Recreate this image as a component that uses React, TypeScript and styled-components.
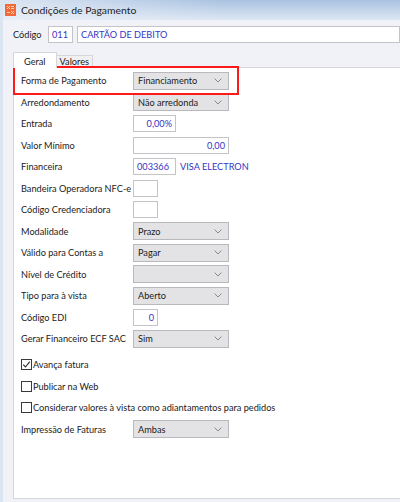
import React from 'react';
import styled, { createGlobalStyle } from 'styled-components';

const GlobalStyle = createGlobalStyle`
  html, body {
    margin: 0;
    padding: 0;
    background: #f1f2f7;
  }
  body {
    font-family: Lato, 'Liberation Sans', sans-serif;
  }
`;

const BLUE_TEXT = '#3535c4';

const Window = styled.div`
  position: relative;
  width: 400px;
  height: 502px;
  display: flex;
  flex-direction: column;
  background: #f1f2f7;
  border-left: 3px solid #dbe5f2;
  box-sizing: border-box;
  overflow: hidden;
  color: #1b1b1b;
  font-size: 9.2px;
`;

const TitleBar = styled.div`
  height: 20px;
  display: flex;
  align-items: center;
  gap: 5px;
  padding-left: 2px;
  background: linear-gradient(to right, rgba(236, 241, 248, 0.75), rgba(236, 241, 248, 0) 55%),
    linear-gradient(to bottom, #a9c2e1, #dde7f3);
  font-size: 10.4px;
  color: #1e1e1e;
`;

const CodeRow = styled.div`
  display: flex;
  align-items: center;
  height: 17px;
  margin-top: 6px;
  padding-left: 10px;
`;

const CodeLabel = styled.span`
  width: 35px;
`;

const TextBox = styled.div<{ $width?: number; $align?: 'left' | 'right'; $grow?: boolean }>`
  height: 17px;
  box-sizing: border-box;
  width: ${(p) => (p.$grow ? 'auto' : `${p.$width ?? 24}px`)};
  flex: ${(p) => (p.$grow ? 1 : 'none')};
  display: flex;
  align-items: center;
  justify-content: ${(p) => (p.$align === 'right' ? 'flex-end' : 'flex-start')};
  padding: 0 3px;
  background: #fff;
  border: 1px solid #c4c4c8;
  color: ${BLUE_TEXT};
  white-space: nowrap;
`;

const TabStrip = styled.div`
  display: flex;
  align-items: flex-end;
  height: 16px;
  margin-top: 8px;
  padding-left: 10px;
`;

const Tab = styled.div<{ $active?: boolean }>`
  height: ${(p) => (p.$active ? 16 : 12)}px;
  box-sizing: border-box;
  padding: ${(p) => (p.$active ? '1px 10px 0 10px' : '0 3px')};
  background: ${(p) => (p.$active ? '#fff' : '#f0f0f2')};
  border: 1px solid #d6d6da;
  border-bottom: ${(p) => (p.$active ? 'none' : '1px solid #d6d6da')};
  border-left: ${(p) => (p.$active ? '1px solid #d6d6da' : 'none')};
  display: flex;
  align-items: center;
  margin-bottom: ${(p) => (p.$active ? '-1px' : '0')};
  position: relative;
  z-index: ${(p) => (p.$active ? 1 : 0)};
`;

const Panel = styled.div`
  flex: 1;
  margin: 0 0 3px 10px;
  background: #fff;
  border: 1px solid #d6d6da;
  border-right: none;
  padding: 2px 0 0 7px;
  display: flex;
  flex-direction: column;
`;

const FieldRow = styled.div`
  height: 21.5px;
  display: flex;
  align-items: center;
`;

const FieldLabel = styled.span`
  width: 112px;
  flex: none;
  white-space: nowrap;
`;

const SelectBox = styled.div`
  width: 96px;
  height: 18px;
  box-sizing: border-box;
  display: flex;
  align-items: center;
  justify-content: space-between;
  padding: 0 6px 0 4px;
  background: #e3e3e5;
  border: 1px solid #b9b9bd;
`;

const Lookup = styled.span`
  margin-left: 4px;
  color: ${BLUE_TEXT};
`;

const CheckRow = styled.label<{ $first?: boolean }>`
  height: 21.5px;
  display: flex;
  align-items: center;
  margin-top: ${(p) => (p.$first ? '4.5px' : '0')};
`;

const CheckBox = styled.span`
  width: 11px;
  height: 11px;
  box-sizing: border-box;
  border: 1px solid #3a3a3a;
  background: #fff;
  margin-right: 1px;
  display: flex;
  align-items: center;
  justify-content: center;
`;

const Highlight = styled.div`
  position: absolute;
  left: 10px;
  top: 66px;
  width: 226px;
  height: 29px;
  box-sizing: border-box;
  border: 2.5px solid #ff1a1a;
  pointer-events: none;
`;

const Chevron = () => (
  <svg width="8" height="5" viewBox="0 0 8 5">
    <path d="M0.5 0.5 L4 4 L7.5 0.5" fill="none" stroke="#8a8a8e" strokeWidth="1" />
  </svg>
);

const Check = () => (
  <svg width="9" height="9" viewBox="0 0 9 9">
    <path d="M1.2 4.6 L3.5 7 L7.8 1.6" fill="none" stroke="#2a2a2a" strokeWidth="1.1" />
  </svg>
);

const AppIcon = () => (
  <svg width="11" height="12" viewBox="0 0 11 12">
    <rect width="11" height="12" fill="#f26a3a" />
    <path d="M2 2 L5 5 M5 2 L2 5 M6 7 L9 10 M9 7 L6 10" stroke="#ffd7b8" strokeWidth="1" />
    <rect x="6" y="2" width="3" height="1" fill="#ffd7b8" />
    <rect x="6" y="4" width="3" height="1" fill="#ffd7b8" />
    <rect x="2" y="8" width="3" height="1" fill="#ffd7b8" />
  </svg>
);

const Select = ({ value }: { value: string }) => (
  <SelectBox>
    <span>{value}</span>
    <Chevron />
  </SelectBox>
);

type Field =
  | { label: string; kind: 'select'; value: string }
  | { label: string; kind: 'input'; value: string; width: number; align?: 'left' | 'right'; lookup?: string };

const fields: Field[] = [
  { label: 'Forma de Pagamento', kind: 'select', value: 'Financiamento' },
  { label: 'Arredondamento', kind: 'select', value: 'Não arredonda' },
  { label: 'Entrada', kind: 'input', value: '0,00%', width: 43, align: 'right' },
  { label: 'Valor Mínimo', kind: 'input', value: '0,00', width: 96, align: 'right' },
  { label: 'Financeira', kind: 'input', value: '003366', width: 43, lookup: 'VISA ELECTRON' },
  { label: 'Bandeira Operadora NFC-e', kind: 'input', value: '', width: 25 },
  { label: 'Código Credenciadora', kind: 'input', value: '', width: 25 },
  { label: 'Modalidade', kind: 'select', value: 'Prazo' },
  { label: 'Válido para Contas a', kind: 'select', value: 'Pagar' },
  { label: 'Nível de Crédito', kind: 'select', value: '' },
  { label: 'Tipo para à vista', kind: 'select', value: 'Aberto' },
  { label: 'Código EDI', kind: 'input', value: '0', width: 25, align: 'right' },
  { label: 'Gerar Financeiro ECF SAC', kind: 'select', value: 'Sim' },
];

const options = [
  { label: 'Avança fatura', checked: true },
  { label: 'Publicar na Web', checked: false },
  { label: 'Considerar valores à vista como adiantamentos para pedidos', checked: false },
];

export default function App() {
  return (
    <>
      <GlobalStyle />
      <Window>
        <TitleBar>
          <AppIcon />
          <span>Condições de Pagamento</span>
        </TitleBar>

        <CodeRow>
          <CodeLabel>Código</CodeLabel>
          <TextBox $width={25}>011</TextBox>
          <span style={{ width: 4 }} />
          <TextBox $grow>CARTÃO DE DEBITO</TextBox>
        </CodeRow>

        <TabStrip>
          <Tab $active>Geral</Tab>
          <Tab>Valores</Tab>
        </TabStrip>

        <Panel>
          {fields.map((f) => (
            <FieldRow key={f.label}>
              <FieldLabel>{f.label}</FieldLabel>
              {f.kind === 'select' ? (
                <Select value={f.value} />
              ) : (
                <>
                  <TextBox $width={f.width} $align={f.align}>
                    {f.value}
                  </TextBox>
                  {f.lookup && <Lookup>{f.lookup}</Lookup>}
                </>
              )}
            </FieldRow>
          ))}

          {options.map((o, i) => (
            <CheckRow key={o.label} $first={i === 0}>
              <CheckBox>{o.checked && <Check />}</CheckBox>
              {o.label}
            </CheckRow>
          ))}

          <FieldRow>
            <FieldLabel>Impressão de Faturas</FieldLabel>
            <Select value="Ambas" />
          </FieldRow>
        </Panel>

        <Highlight />
      </Window>
    </>
  );
}
